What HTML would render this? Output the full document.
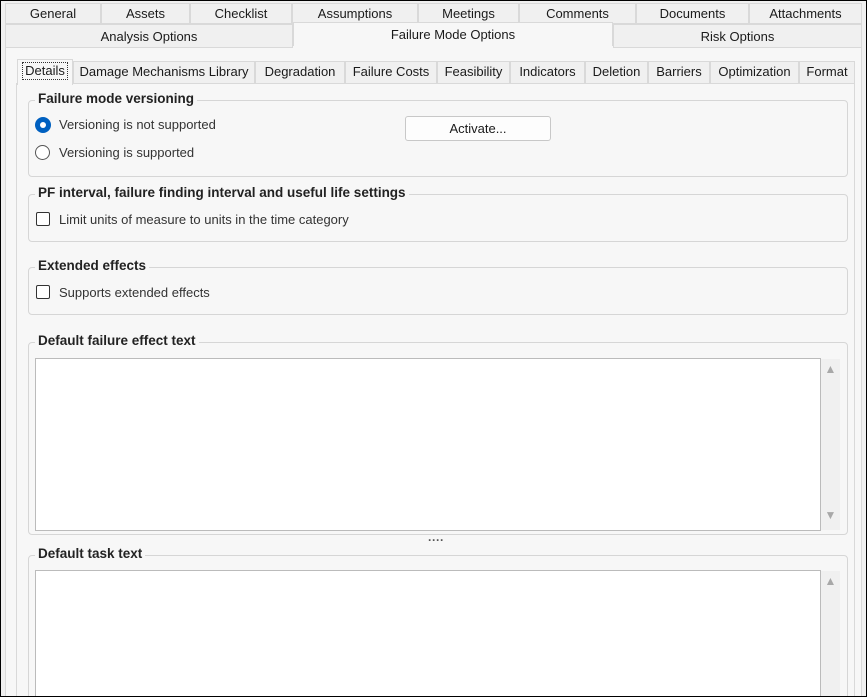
<!DOCTYPE html>
<html><head><style>
*{box-sizing:border-box;margin:0;padding:0}
html{width:867px;height:697px;overflow:hidden}
body{width:867px;height:697px;overflow:hidden;background:#f0f0f0;font-family:"Liberation Sans",sans-serif;font-size:13px;color:#1a1a1a;position:relative}
.frame{position:absolute;left:0;top:0;width:867px;height:697px;border:1px solid #000;z-index:10;pointer-events:none}
.a{position:absolute}
.t{position:absolute;border:1px solid #d9d9d9;background:#f0f0f0;text-align:center;font-size:13px;line-height:20px}
.st{position:absolute;top:61px;height:22px;border:1px solid #d9d9d9;border-bottom:none;background:#f0f0f0;text-align:center;line-height:20px;font-size:13px}
.grp{position:absolute;left:28px;width:820px;border:1px solid #d6d6d6;border-radius:4px}
.gt{position:absolute;left:6px;top:-10px;background:#f7f7f7;padding:0 3px;font-weight:bold;font-size:13.5px;color:#222}
.cb{position:absolute;width:14px;height:14px;border:1px solid #333;border-radius:2px;background:#fff}
.lbl{position:absolute;font-size:13px;color:#333}
.ta{position:absolute;background:#fff;border:1px solid #bbb}
.sb{position:absolute;background:#f0f0f0;color:#a8a8a8;font-size:12px;text-align:center}
</style></head><body>
<div class="frame"></div>
<div class="t" style="left:5px;top:3px;width:96px;height:21px">General</div>
<div class="t" style="left:101px;top:3px;width:89px;height:21px">Assets</div>
<div class="t" style="left:190px;top:3px;width:102px;height:21px">Checklist</div>
<div class="t" style="left:292px;top:3px;width:126px;height:21px">Assumptions</div>
<div class="t" style="left:418px;top:3px;width:101px;height:21px">Meetings</div>
<div class="t" style="left:519px;top:3px;width:117px;height:21px">Comments</div>
<div class="t" style="left:636px;top:3px;width:113px;height:21px">Documents</div>
<div class="t" style="left:749px;top:3px;width:113px;height:21px">Attachments</div>
<div class="t" style="left:5px;top:24px;width:288px;height:24px;line-height:24px">Analysis Options</div>
<div class="t" style="left:613px;top:24px;width:249px;height:24px;line-height:24px">Risk Options</div>
<div class="t" style="left:293px;top:22px;width:320px;height:27px;background:#f7f7f7;border-bottom:none;line-height:24px">Failure Mode Options</div>
<div class="a" style="left:5px;top:47px;width:857px;height:650px;background:#f7f7f7;border:1px solid #d9d9d9;border-bottom:none"></div>
<div class="a" style="left:293px;top:46px;width:320px;height:3px;background:#f7f7f7"></div>

<div class="st" style="left:73px;width:182px">Damage Mechanisms Library</div>
<div class="st" style="left:255px;width:90px">Degradation</div>
<div class="st" style="left:345px;width:92px">Failure Costs</div>
<div class="st" style="left:437px;width:73px">Feasibility</div>
<div class="st" style="left:510px;width:75px">Indicators</div>
<div class="st" style="left:585px;width:63px">Deletion</div>
<div class="st" style="left:648px;width:62px">Barriers</div>
<div class="st" style="left:710px;width:89px">Optimization</div>
<div class="st" style="left:799px;width:56px">Format</div>
<div class="a" style="left:16px;top:83px;width:839px;height:614px;border:1px solid #d9d9d9;border-bottom:none;background:#f7f7f7"></div>
<div class="st" style="left:17px;top:59px;width:56px;height:26px;background:#f7f7f7;border-bottom:none"><span style="border:1px dotted #333;padding:0 2px;display:inline-block;line-height:16px;margin-top:2px">Details</span></div>

<div class="grp" style="top:100px;height:77px"><div class="gt">Failure mode versioning</div></div>
<div class="a" style="left:35px;top:117px;width:16px;height:16px;border-radius:50%;background:#0060c0"><div class="a" style="left:5px;top:5px;width:6px;height:6px;border-radius:50%;background:#fff"></div></div>
<div class="lbl" style="left:59px;top:117px">Versioning is not supported</div>
<div class="a" style="left:35px;top:145px;width:15px;height:15px;border-radius:50%;border:1px solid #555;background:#fff"></div>
<div class="lbl" style="left:59px;top:145px">Versioning is supported</div>
<div class="a" style="left:405px;top:116px;width:146px;height:25px;border:1px solid #c8c8c8;border-radius:3px;background:#fdfdfd;text-align:center;line-height:23px">Activate...</div>

<div class="grp" style="top:194px;height:48px"><div class="gt">PF interval, failure finding interval and useful life settings</div></div>
<div class="cb" style="left:36px;top:212px"></div>
<div class="lbl" style="left:59px;top:212px">Limit units of measure to units in the time category</div>

<div class="grp" style="top:267px;height:48px"><div class="gt">Extended effects</div></div>
<div class="cb" style="left:36px;top:285px"></div>
<div class="lbl" style="left:59px;top:285px">Supports extended effects</div>

<div class="grp" style="top:342px;height:193px"><div class="gt">Default failure effect text</div></div>
<div class="ta" style="left:35px;top:358px;width:786px;height:173px"></div>
<div class="sb" style="left:821px;top:359px;width:19px;height:171px"><div style="margin-top:3px">▲</div><div style="margin-top:132px">▼</div></div>
<div class="a" style="left:428px;top:533px;font-size:12px;font-weight:bold;color:#555">····</div>

<div class="grp" style="top:555px;height:160px"><div class="gt">Default task text</div></div>
<div class="ta" style="left:35px;top:570px;width:786px;height:140px"></div>
<div class="sb" style="left:821px;top:571px;width:19px;height:130px"><div style="margin-top:3px">▲</div></div>
</body></html>
